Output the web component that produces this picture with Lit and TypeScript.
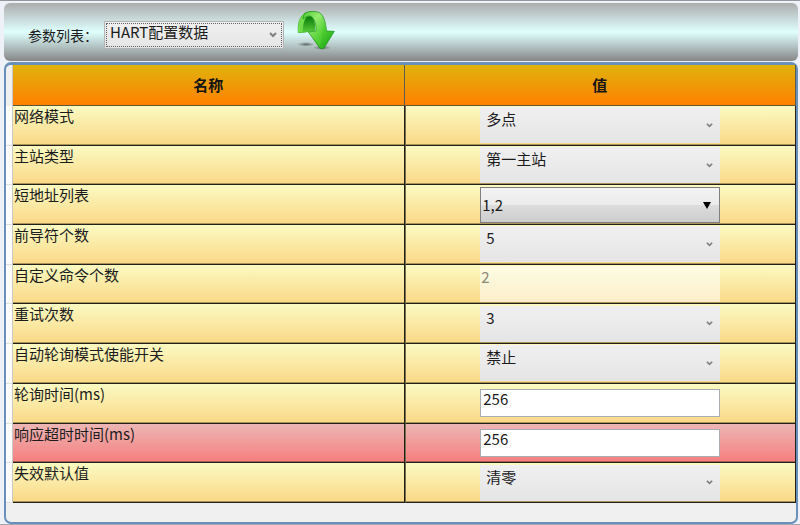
import { LitElement, html, css, svg } from "lit";
import { customElement, state } from "lit/decorators.js";
import { classMap } from "lit/directives/class-map.js";

type Kind = "combo" | "list" | "text" | "disabled";

interface Param {
  id: string;
  name: string;
  kind: Kind;
  value: string;
  alert?: boolean;
}

const PARAMS: Param[] = [
  { id: "mode", name: "网络模式", kind: "combo", value: "多点" },
  { id: "master", name: "主站类型", kind: "combo", value: "第一主站" },
  { id: "addresses", name: "短地址列表", kind: "list", value: "1,2" },
  { id: "preambles", name: "前导符个数", kind: "combo", value: "5" },
  { id: "commands", name: "自定义命令个数", kind: "disabled", value: "2" },
  { id: "retries", name: "重试次数", kind: "combo", value: "3" },
  { id: "polling", name: "自动轮询模式使能开关", kind: "combo", value: "禁止" },
  { id: "period", name: "轮询时间(ms)", kind: "text", value: "256" },
  { id: "timeout", name: "响应超时时间(ms)", kind: "text", value: "256", alert: true },
  { id: "fallback", name: "失效默认值", kind: "combo", value: "清零" },
];

const chevron = svg`<path d="M1 2 L4 5 L7 2" fill="none" stroke="currentColor" stroke-width="2"/>`;
const triangle = svg`<path d="M0 1 H8 L4 8 Z" fill="currentColor"/>`;

@customElement("app-root")
export class AppRoot extends LitElement {
  @state() private params = PARAMS;

  static styles = css`
    :host {
      display: flex;
      flex-direction: column;
      box-sizing: border-box;
      min-height: 100vh;
      padding: 2px 2px 0 4px;
      gap: 1px;
      border-top: 1px solid #94989c;
      border-bottom: 1px solid #a4a8ac;
      background: #eef2f8;
      color: #1c1c1c;
      font: 15px/20px "Noto Sans CJK SC", "Noto Sans", sans-serif;
    }
    .toolbar {
      display: flex;
      align-items: center;
      box-sizing: border-box;
      height: 58px;
      padding: 5px 24px 0;
      border-radius: 6px;
      background: linear-gradient(#acacac, #e0ffff 50%, #868686);
    }
    .toolbar label {
      width: 76px;
      font-size: 14px;
      white-space: nowrap;
    }
    .field {
      display: grid;
      align-items: center;
      width: 240px;
      max-width: 100%;
      margin: 0 auto;
    }
    .field > * {
      grid-area: 1 / 1;
    }
    .field svg {
      justify-self: end;
      width: 8px;
      height: 8px;
      margin-right: 7px;
      color: #808080;
      pointer-events: none;
    }
    .toolbar .field {
      width: 180px;
      margin: 0;
    }
    select,
    input {
      appearance: none;
      box-sizing: border-box;
      width: 100%;
      margin: 0;
      border: 0;
      border-radius: 0;
      color: inherit;
      font: inherit;
      outline: none;
    }
    .source {
      height: 28px;
      padding: 0 20px 5px 5px;
      border: 1px solid #b4b4b4;
      background: linear-gradient(#f0f0f0, #e5e5e5);
      outline: 1px dotted #606060;
      outline-offset: -3px;
    }
    .refresh {
      display: flex;
      margin: 0 0 0 13px;
      padding: 0;
      border: 0;
      background: none;
    }
    .refresh svg {
      width: 38px;
      height: 49px;
    }
    .panel {
      display: grid;
      flex: 1;
      padding-bottom: 19px;
      border: 2px solid #6890b8;
      border-top-width: 3px;
      border-radius: 7px;
      background: #f0f0f0;
    }
    table {
      width: 100%;
      height: 100%;
      table-layout: fixed;
      border-collapse: separate;
      border-spacing: 0;
    }
    th,
    td {
      box-sizing: border-box;
      padding: 0;
    }
    .gutter {
      width: 7px;
      border-right: 1px solid #c8c8c8;
    }
    tbody .gutter {
      border-bottom: 1px solid #dcdfe4;
      background: #fcfcfd;
    }
    tbody tr {
      height: 39px;
    }
    th.head {
      height: 41px;
      border-right: 1px solid #5c5c50;
      border-bottom: 1px solid #605830;
      background: linear-gradient(#dfb30c, #ff8000);
      color: #141414;
      font-weight: 700;
    }
    th.name,
    td.value {
      border-right: 1px solid #202018;
      border-bottom: 1px solid #202018;
      background: linear-gradient(#fbfac2, #fad886);
      box-shadow: inset 0 -1px rgba(50, 45, 20, 0.4);
    }
    th.name {
      padding-left: 1px;
      font-weight: 400;
      text-align: left;
      vertical-align: top;
    }
    td.value {
      border-left: 1px solid #78704c;
      vertical-align: middle;
    }
    .alert th.name,
    .alert td.value {
      background: linear-gradient(#ecb6b4, #f67e7e);
    }
    .combo {
      height: 36px;
      padding: 0 20px 12px 6px;
      background: linear-gradient(#f0f0f0, #e5e5e5);
    }
    .list {
      height: 36px;
      padding: 0 20px 0 1px;
      border: 1px solid #808080;
      background: linear-gradient(#f3f3f3, #ebebeb 50%, #dddddd 50%, #cdcdcd);
    }
    td .list + svg {
      color: #000;
      margin-right: 9px;
    }
    td .combo + svg {
      width: 7px;
      height: 7px;
    }
    .text {
      height: 28px;
      padding: 0 2px 9px;
      border: 1px solid #abadb3;
      background: #fff;
    }
    .disabled {
      height: 36px;
      padding: 0 1px 16px;
      background: rgba(255, 255, 255, 0.56);
      color: #8c8a74;
      opacity: 1;
    }
  `;

  private control(p: Param) {
    if (p.kind === "text" || p.kind === "disabled") {
      return html`<div class="field">
        <input class=${p.kind} type="text" aria-labelledby=${p.id} .value=${p.value} ?disabled=${p.kind === "disabled"} />
      </div>`;
    }
    return html`<div class="field">
      <select class=${p.kind} aria-labelledby=${p.id}><option>${p.value}</option></select>
      <svg viewBox="0 0 8 8" aria-hidden="true">${p.kind === "list" ? triangle : chevron}</svg>
    </div>`;
  }

  render() {
    return html`
      <header class="toolbar">
        <label for="source">参数列表：</label>
        <div class="field">
          <select id="source" class="source"><option>HART配置数据</option></select>
          <svg viewBox="0 0 8 8" aria-hidden="true">${chevron}</svg>
        </div>
        <button class="refresh" type="button" aria-label="刷新">
          <svg viewBox="21 15 114 147" aria-hidden="true">
            <defs>
              <linearGradient id="band" x1="0" y1="0" x2="1" y2="1">
                <stop offset="0" stop-color="#4cc832" />
                <stop offset="0.3" stop-color="#98ec70" />
                <stop offset="0.6" stop-color="#4ccc30" />
                <stop offset="1" stop-color="#12a010" />
              </linearGradient>
              <linearGradient id="inner" x1="0" y1="0" x2="0" y2="1">
                <stop offset="0" stop-color="#087808" />
                <stop offset="1" stop-color="#58cc3c" />
              </linearGradient>
              <radialGradient id="shade">
                <stop offset="0" stop-color="#404848" stop-opacity="0.8" />
                <stop offset="1" stop-color="#606868" stop-opacity="0" />
              </radialGradient>
            </defs>
            <ellipse cx="48" cy="118" rx="27" ry="7" fill="url(#shade)" />
            <ellipse cx="96" cy="128" rx="28" ry="7" fill="url(#shade)" />
            <path d="M25 83 C22 52 32 23 60 21 L78 21 C68 31 60 44 63 69 L51 80 Z" fill="#3cb828" stroke="#188c14" stroke-width="2" />
            <path d="M36 83 C34 56 44 36 60 34 C73 38 77 56 75 78 L55 81 Z" fill="url(#inner)" />
            <path d="M25 83 C22 52 32 22 62 21 C50 27 39 46 38 82 Z" fill="#70dc4c" />
            <path d="M45 24 C55 18 79 18 88 23 C101 30 106 50 110 78 L133 79 L101 131 L90 130 L55 81 L78 78 C79 55 72 35 59 33 C51 33 46 36 39 42 C40 34 42 29 45 24 Z" fill="url(#band)" stroke="#14900f" stroke-width="2" stroke-linejoin="round" />
            <path d="M61 84 L82 81 C82 59 79 40 67 29 C86 31 94 48 97 81 L90 124 Z" fill="#80e458" opacity="0.2" />
          </svg>
        </button>
      </header>
      <main class="panel">
        <table>
          <thead>
            <tr>
              <td class="gutter"></td>
              <th class="head" scope="col">名称</th>
              <th class="head" scope="col">值</th>
            </tr>
          </thead>
          <tbody>
            ${this.params.map(
              (p) => html`<tr class=${classMap({ alert: !!p.alert })}>
                <td class="gutter"></td>
                <th class="name" scope="row" id=${p.id}>${p.name}</th>
                <td class="value">${this.control(p)}</td>
              </tr>`
            )}
          </tbody>
        </table>
      </main>
    `;
  }
}
